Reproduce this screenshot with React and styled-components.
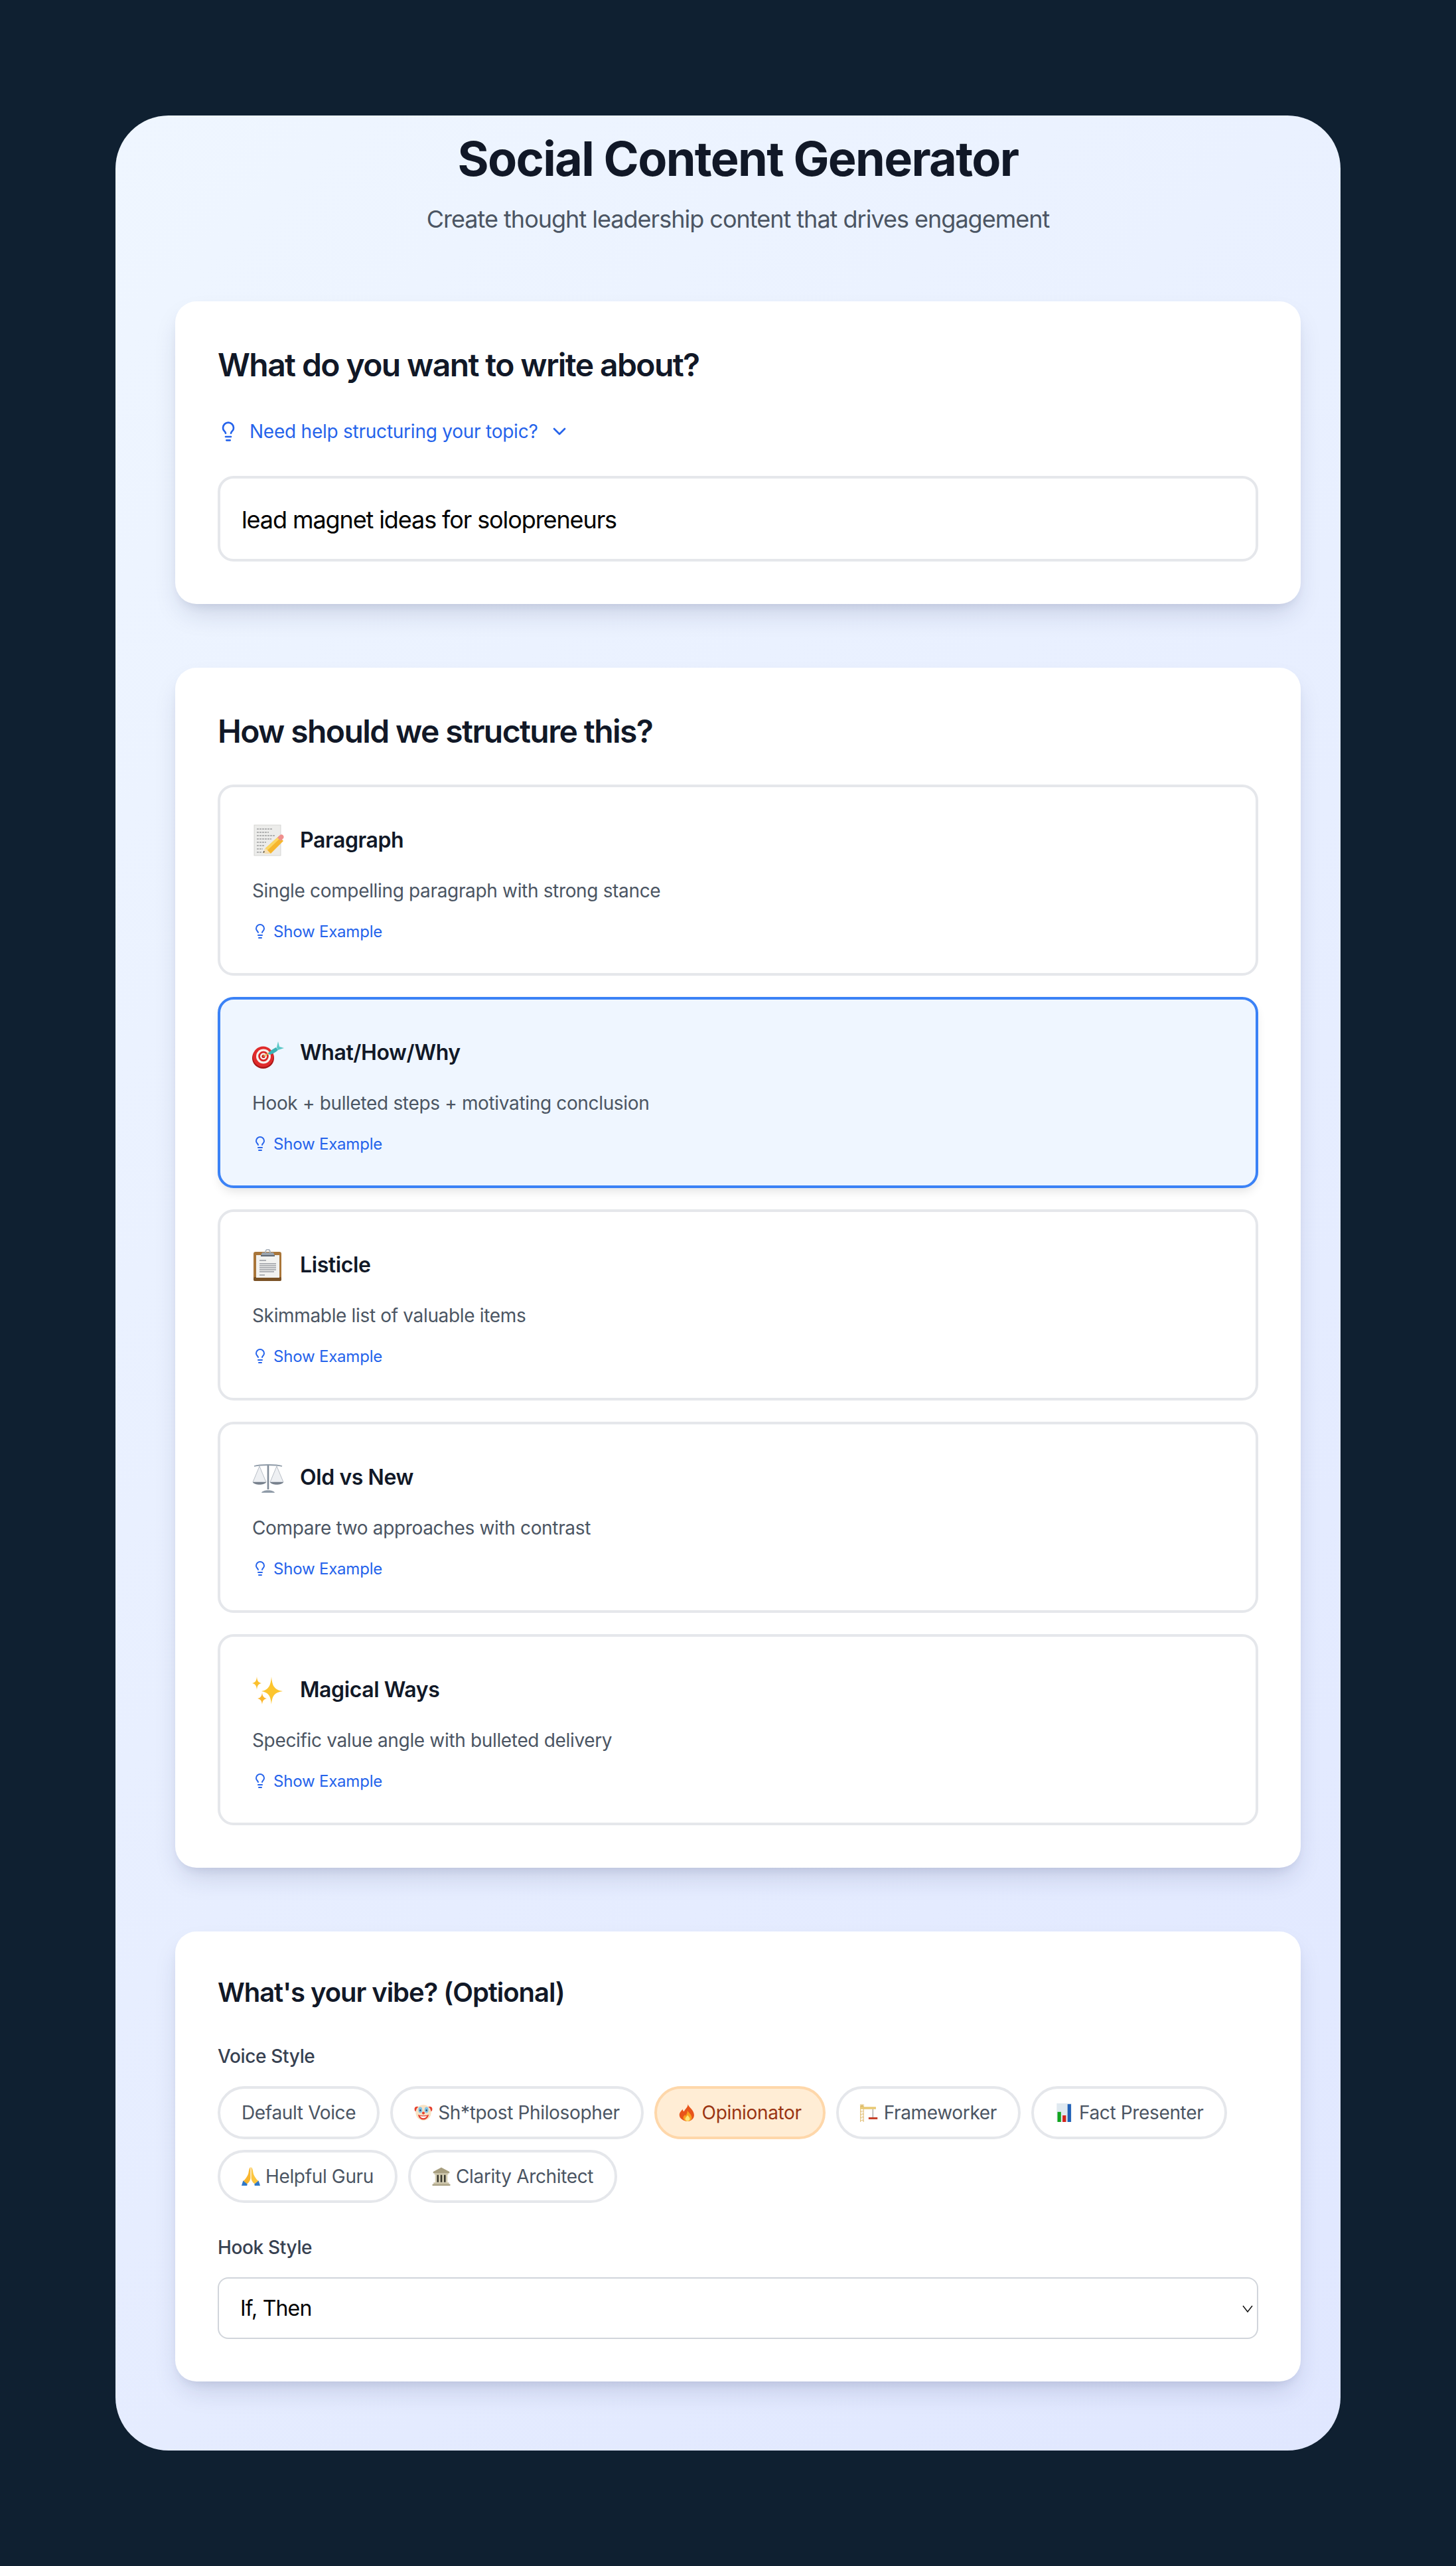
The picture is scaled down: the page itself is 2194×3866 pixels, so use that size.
import React from "react"
import styled, { createGlobalStyle } from "styled-components"
import { ChevronDown, Lightbulb } from "lucide-react"

const GlobalStyle = createGlobalStyle`
  * {
    box-sizing: border-box;
  }
  body {
    margin: 0;
    background: #0f2031;
    font-family: Inter, "Liberation Sans", sans-serif;
  }
`

const Page = styled.div`
  min-height: 3866px;
  padding: 174px;
`

const Panel = styled.main`
  height: 3518px;
  padding: 25px 60px 0 90px;
  border-radius: 80px;
  background: linear-gradient(135deg, #eff6ff 0%, #e0e7ff 100%);
`

const Header = styled.header`
  text-align: center;
  margin-bottom: 96px;
`

const Title = styled.h1`
  margin: 0 0 23px;
  font-size: 72px;
  line-height: 80px;
  font-weight: 700;
  letter-spacing: -1.65px;
  color: #111827;
`

const Subtitle = styled.p`
  margin: 0;
  font-size: 36px;
  line-height: 56px;
  letter-spacing: -1px;
  color: #4b5563;
`

const Card = styled.section`
  padding: 64px;
  margin-bottom: 96px;
  background: #fff;
  border-radius: 32px;
  box-shadow: 0 20px 40px -10px rgba(30, 41, 90, 0.18), 0 8px 16px -8px rgba(30, 41, 90, 0.12);
`

const CardTitle = styled.h2`
  margin: 0 0 48px;
  font-size: 48px;
  line-height: 64px;
  font-weight: 600;
  letter-spacing: -1.6px;
  color: #111827;
`

const VibeTitle = styled(CardTitle)`
  margin-bottom: 48px;
  font-size: 40px;
  line-height: 56px;
  letter-spacing: -1.05px;
`

const HelpToggle = styled.button`
  display: flex;
  align-items: center;
  gap: 16px;
  height: 40px;
  margin-bottom: 47px;
  padding: 0;
  border: 0;
  background: none;
  font: inherit;
  font-size: 28px;
  letter-spacing: -0.24px;
  color: #2563eb;
`

const TopicInput = styled.input`
  display: block;
  width: 100%;
  height: 129px;
  padding: 2px 32px 0;
  border: 4px solid #e5e7eb;
  border-radius: 24px;
  background: #fff;
  font: inherit;
  font-size: 36px;
  letter-spacing: -1.1px;
  color: #000;
`

const OptionList = styled.div`
  display: flex;
  flex-direction: column;
  gap: 32px;
`

const Option = styled.article`
  height: 288px;
  padding: 48px;
  border: 4px solid ${p => (p.$selected ? "#3b82f6" : "#e5e7eb")};
  border-radius: 24px;
  background: ${p => (p.$selected ? "#eff6ff" : "#fff")};
  box-shadow: ${p => (p.$selected ? "0 8px 16px -4px rgba(0, 0, 0, 0.12)" : "none")};
`

const OptionHead = styled.div`
  display: flex;
  align-items: center;
  gap: 24px;
  height: 64px;
`

const OptionName = styled.h3`
  margin: 0;
  font-size: 32px;
  line-height: 48px;
  font-weight: 600;
  letter-spacing: -0.4px;
  color: #111827;
`

const OptionDesc = styled.p`
  margin: 24px 0 25px;
  font-size: 28px;
  line-height: 40px;
  letter-spacing: -0.34px;
  color: #4b5563;
`

const ShowExample = styled.button`
  display: flex;
  align-items: center;
  gap: 8px;
  height: 32px;
  padding: 0;
  border: 0;
  background: none;
  font: inherit;
  font-size: 24px;
  letter-spacing: -0.2px;
  color: #2563eb;
`

const Label = styled.div`
  margin-bottom: 25px;
  font-size: 28px;
  line-height: 40px;
  font-weight: 500;
  letter-spacing: -0.35px;
  color: #374151;
`

const HookLabel = styled(Label)`
  margin: 47px 0 25px;
`

const Chips = styled.div`
  display: flex;
  flex-wrap: wrap;
  gap: 16px;
`

const Chip = styled.button`
  display: inline-flex;
  align-items: center;
  gap: 8px;
  height: 80px;
  padding: 0 32px;
  border: 4px solid ${p => (p.$active ? "#fed7aa" : "#e5e7eb")};
  border-radius: 40px;
  background: ${p => (p.$active ? "#ffedd5" : "#fff")};
  font: inherit;
  font-size: 28px;
  letter-spacing: -0.35px;
  color: ${p => (p.$active ? "#9a3412" : "#4b5563")};
`

const SelectWrap = styled.div`
  position: relative;
`

const HookSelect = styled.select`
  display: block;
  width: 100%;
  height: 93px;
  padding: 0 32px;
  appearance: none;
  border: 2px solid #d1d5db;
  border-radius: 16px;
  background: #fff;
  font: inherit;
  font-size: 32px;
  letter-spacing: -0.8px;
  color: #000;
`

const SelectArrow = styled.svg`
  position: absolute;
  top: 38px;
  right: 7px;
  width: 18px;
  height: 18px;
  pointer-events: none;
`

const EmojiSvg = styled.svg`
  flex: none;
  display: block;
`

const Emoji = ({ size = 48, children }) => (
  <EmojiSvg width={size} height={size} viewBox="0 0 48 48" aria-hidden="true">
    {children}
  </EmojiSvg>
)

const Memo = () => (
  <Emoji>
    <rect x="3" y="1" width="40" height="46" fill="#ececea" stroke="#cfcfcc" strokeWidth="0.8" />
    <path
      d="M7 7h24M7 12h18M7 17h28M7 22h22M7 27h14M7 32h11M7 37h9M7 42h7"
      stroke="#77787a"
      strokeWidth="1.2"
      strokeDasharray="3 1"
    />
    <g transform="translate(2 5)">
      <path d="M14 38l4-7 20-18 7 7-19 19z" fill="#f6b62e" />
      <path d="M18 31l21-19 2 3-21 20z" fill="#fbd763" />
      <path d="M36 15l4-4c1.500-1.200 3-1 4.500.5 1.300 1.400 1.500 3 .5 4.500l-4 4z" fill="#ef8f8d" />
      <path d="M14 38l4-7 8 8z" fill="#f5dfb4" />
      <path d="M14 38l1.600-3 1.500 1.800z" fill="#3b3b3b" />
    </g>
  </Emoji>
)

const Target = () => (
  <Emoji>
    <ellipse cx="16.500" cy="32" rx="16.500" ry="16" fill="#a81616" />
    <circle cx="16.500" cy="30" r="15.500" fill="#e02b2b" />
    <circle cx="17" cy="29.500" r="11" fill="#f6f1ec" />
    <circle cx="17" cy="29.500" r="7.800" fill="#d92525" />
    <circle cx="17" cy="29.500" r="5" fill="#f6f1ec" />
    <circle cx="17" cy="29.500" r="2.600" fill="#c92020" />
    <path d="M17 29.500l9-5.500" stroke="#e2b94f" strokeWidth="1.600" />
    <path d="M24 25c3-4 8-7 12-9l3 4c-3 3-8 6-13 7z" fill="#3bb3b5" />
    <path d="M39 7l-2 9 2 4 9-3-7-2z" fill="#5ac8c8" />
  </Emoji>
)

const Clipboard = () => (
  <Emoji>
    <rect x="2" y="4" width="42" height="44" rx="3" fill="#a9763a" />
    <rect x="2" y="42" width="42" height="6" rx="2" fill="#7a5226" />
    <rect x="6" y="9" width="35" height="34" fill="#f2f2f0" />
    <path d="M11 17h10M11 22h25M11 25h25M11 28h25M11 31h25M11 34h22M11 39h8" stroke="#aeb0b4" strokeWidth="2" />
    <path d="M20 5c0-6 7-6 7 0" fill="none" stroke="#aab3bd" strokeWidth="1.800" />
    <path d="M13 10l2-5h17l2 5z" fill="#9aa3ad" />
    <rect x="13" y="9" width="21" height="2" fill="#5f6873" />
  </Emoji>
)

const Scales = () => (
  <Emoji>
    <path d="M24 4v38" stroke="#7f8a97" strokeWidth="2.600" />
    <path d="M14 47c2-5 18-5 20 0z" fill="#8e9aa7" />
    <path d="M3 7c7-2 14-2 21-2 7 0 14 0 21 2" fill="none" stroke="#8e9aa7" strokeWidth="1.800" />
    <path d="M11 7L1 31h20zM37 7L27 31h20z" fill="#eef0f3" stroke="#a8b0ba" strokeWidth="0.800" />
    <path d="M1 31c2 5 18 5 20 0zM27 31c2 5 18 5 20 0z" fill="#77818d" />
  </Emoji>
)

const Sparkles = () => (
  <Emoji>
    <path d="M29 4c1.200 15 5 20 17 22-12 2-15.800 6-17 20-1.200-14-5-18-15-20 10-2 13.800-7 15-22z" fill="#fcc52f" />
    <path d="M7 4c.5 6 2 9 7 10-5 1-6.500 4-7 10-.5-6-2-9-7-10 5-1 6.500-4 7-10z" fill="#fbc02d" />
    <path d="M15 28c.5 5 2 8 7 9-5 1-6.500 4-7 9-.5-5-2-8-7-9 5-1 6.500-4 7-9z" fill="#fbb62d" />
  </Emoji>
)

const Clown = () => (
  <Emoji size={28}>
    <circle cx="8" cy="15" r="7" fill="#e5402f" />
    <circle cx="40" cy="15" r="7" fill="#e5402f" />
    <circle cx="24" cy="24" r="20" fill="#f7e2c4" />
    <ellipse cx="16" cy="17" rx="5" ry="7.500" fill="#7cc3ea" />
    <ellipse cx="32" cy="17" rx="5" ry="7.500" fill="#7cc3ea" />
    <circle cx="16" cy="18" r="2" fill="#333" />
    <circle cx="32" cy="18" r="2" fill="#333" />
    <circle cx="24" cy="25" r="3.500" fill="#e5402f" />
    <path d="M10 29c6 3 22 3 28 0-2 9-8 13-14 13s-12-4-14-13z" fill="#e5402f" />
    <path d="M15 32c5 2 13 2 18 0-2 4-5 6-9 6s-7-2-9-6z" fill="#fff" />
  </Emoji>
)

const Fire = () => (
  <Emoji size={28}>
    <path d="M25 2c2 8 16 15 16 28 0 10-8 16-17 16S3 40 3 30c0-7 6-11 8-15 1 3 2 5 4 6 2-6 10-11 10-19z" fill="#e8541a" />
    <path d="M24 18c1 5 11 10 11 19 0 6-5 9-11 9s-11-3-11-9c0-4 3-6 5-8 1 2 1 3 2 3 1-4 4-8 4-14z" fill="#f9a11f" />
    <path d="M24 30c1 3 6 5 6 10 0 4-3 6-6 6s-6-2-6-6c0-4 5-6 6-10z" fill="#fde47a" />
  </Emoji>
)

const Crane = () => (
  <Emoji size={28}>
    <path d="M1 2v46M9 2v46M1 12h8M1 20h8M1 28h8M1 36h8M1 44h8" stroke="#e3c078" strokeWidth="1.800" fill="none" />
    <path d="M1 20l8 8M1 28l8 8M1 36l8 8" stroke="#e3c078" strokeWidth="1" />
    <path d="M0 9h41v6H0z" fill="#e8c872" />
    <path d="M5 1L1 9h8z" fill="#d9b65c" />
    <path d="M33 15v21" stroke="#777" strokeWidth="1.500" />
    <rect x="22" y="36" width="23" height="5" fill="#c53d27" />
  </Emoji>
)

const BarChart = () => (
  <Emoji size={28}>
    <rect x="4" y="0" width="38" height="48" fill="#dfe9f0" />
    <rect x="6" y="22" width="9" height="26" fill="#12a51e" />
    <rect x="19" y="31" width="9" height="17" fill="#d3231c" />
    <rect x="32" y="2" width="9" height="46" fill="#2060b8" />
  </Emoji>
)

const Pray = () => (
  <Emoji size={28}>
    <path d="M23 0c-3 2-4 8-5 14-1 7-8 18-14 22l9 8c6-3 10-10 10-16z" fill="#f9b62e" />
    <path d="M25 0c3 2 4 8 5 14 1 7 8 18 14 22l-9 8c-6-3-10-10-10-16z" fill="#fcc63f" />
    <path d="M0 48l4-13 11 9-1 4zM48 48l-4-13-11 9 1 4z" fill="#2f78c8" />
  </Emoji>
)

const Museum = () => (
  <Emoji size={28}>
    <path d="M24 1L3 12v4h42v-4z" fill="#a89f80" />
    <rect x="6" y="16" width="36" height="3" fill="#c5bd9e" />
    <rect x="8" y="19" width="32" height="21" fill="#d7d0b4" />
    <path d="M15 20v19M24 20v19M33 20v19" stroke="#3b3a30" strokeWidth="4.500" />
    <rect x="4" y="40" width="40" height="4" fill="#c5bd9e" />
    <rect x="1" y="44" width="46" height="4" fill="#a89f80" />
  </Emoji>
)

const options = [
  { icon: <Memo />, name: "Paragraph", desc: "Single compelling paragraph with strong stance" },
  { icon: <Target />, name: "What/How/Why", desc: "Hook + bulleted steps + motivating conclusion", selected: true },
  { icon: <Clipboard />, name: "Listicle", desc: "Skimmable list of valuable items" },
  { icon: <Scales />, name: "Old vs New", desc: "Compare two approaches with contrast" },
  { icon: <Sparkles />, name: "Magical Ways", desc: "Specific value angle with bulleted delivery" },
]

const voices = [
  { label: "Default Voice" },
  { icon: <Clown />, label: "Sh*tpost Philosopher" },
  { icon: <Fire />, label: "Opinionator", active: true },
  { icon: <Crane />, label: "Frameworker" },
  { icon: <BarChart />, label: "Fact Presenter" },
  { icon: <Pray />, label: "Helpful Guru" },
  { icon: <Museum />, label: "Clarity Architect" },
]

const App = () => {
  return (
    <Page>
      <GlobalStyle />
      <Panel>
        <Header>
          <Title>Social Content Generator</Title>
          <Subtitle>Create thought leadership content that drives engagement</Subtitle>
        </Header>

        <Card>
          <CardTitle>What do you want to write about?</CardTitle>
          <HelpToggle>
            <Lightbulb size={32} />
            Need help structuring your topic?
            <ChevronDown size={32} />
          </HelpToggle>
          <TopicInput defaultValue="lead magnet ideas for solopreneurs" />
        </Card>

        <Card>
          <CardTitle>How should we structure this?</CardTitle>
          <OptionList>
            {options.map(o => (
              <Option key={o.name} $selected={o.selected}>
                <OptionHead>
                  {o.icon}
                  <OptionName>{o.name}</OptionName>
                </OptionHead>
                <OptionDesc>{o.desc}</OptionDesc>
                <ShowExample>
                  <Lightbulb size={24} />
                  Show Example
                </ShowExample>
              </Option>
            ))}
          </OptionList>
        </Card>

        <Card>
          <VibeTitle>What's your vibe? (Optional)</VibeTitle>
          <Label>Voice Style</Label>
          <Chips>
            {voices.map(v => (
              <Chip key={v.label} $active={v.active}>
                {v.icon}
                {v.label}
              </Chip>
            ))}
          </Chips>
          <HookLabel>Hook Style</HookLabel>
          <SelectWrap>
            <HookSelect defaultValue="if-then">
              <option value="if-then">If, Then</option>
            </HookSelect>
            <SelectArrow viewBox="0 0 18 18" fill="none" stroke="#111" strokeWidth="1.500">
              <path d="M2 5l7 9 7-9" />
            </SelectArrow>
          </SelectWrap>
        </Card>
      </Panel>
    </Page>
  )
}

export default App
